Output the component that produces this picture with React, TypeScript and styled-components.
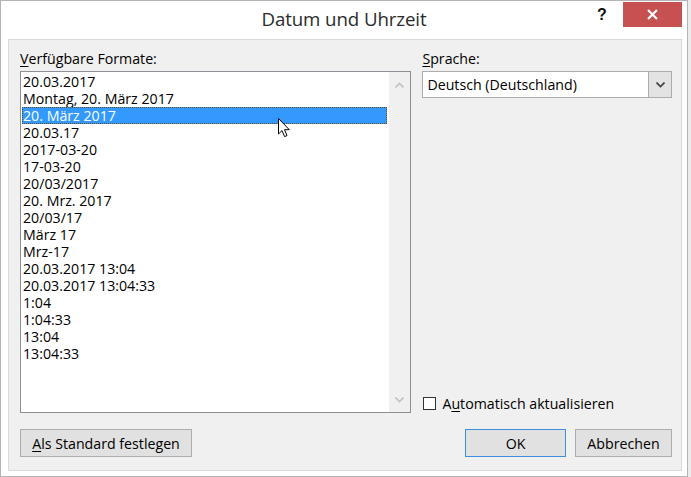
import React from "react";
import styled, { createGlobalStyle } from "styled-components";

const Global = createGlobalStyle`
  html, body { margin: 0; padding: 0; background: #ececec; }
  body { font-family: "Open Sans", "Noto Sans", sans-serif; }
`;

const Window = styled.div`
  width: 686px;
  height: 475px;
  border: 1px solid #b4b4b4;
  background: #ffffff;
  display: flex;
  flex-direction: column;
  position: relative;
`;

const TitleBar = styled.div`
  height: 38px;
  display: flex;
  align-items: flex-start;
  justify-content: center;
  position: relative;
`;

const Title = styled.div`
  font-family: "Open Sans", sans-serif;
  font-size: 18.7px;
  line-height: 24px;
  color: #2b2b2b;
  margin-top: 6px;
  letter-spacing: -0.1px;
`;

const TitleButtons = styled.div`
  position: absolute;
  right: 5px;
  top: 1px;
  display: flex;
  align-items: flex-start;
`;

const HelpButton = styled.div`
  font-family: "Liberation Sans", sans-serif;
  font-weight: bold;
  font-size: 16px;
  color: #111;
  width: 26px;
  text-align: center;
  margin-top: 4px;
  margin-right: 8px;
`;

const CloseButton = styled.div`
  width: 59px;
  height: 25px;
  background: #c75050;
  display: flex;
  align-items: center;
  justify-content: center;
`;

const Panel = styled.div`
  flex: 1;
  margin: 0 5px 5px 7px;
  border: 1px solid #dadada;
  background: #f0f0f0;
  padding: 9px 9px 13px 11px;
  display: flex;
  flex-direction: column;
  font-size: 14.2px;
  color: #000;
`;

const Columns = styled.div`
  display: flex;
  gap: 11px;
  flex: 1;
`;

const LeftColumn = styled.div`
  width: 392px;
  display: flex;
  flex-direction: column;
`;

const RightColumn = styled.div`
  width: 250px;
  display: flex;
  flex-direction: column;
`;

const Label = styled.div`
  height: 19px;
  line-height: 19px;
  margin-bottom: 3px;
  white-space: nowrap;
`;

const U = styled.span`
  text-decoration: underline;
  text-underline-offset: 2px;
`;

const ListBox = styled.div`
  height: 342px;
  border: 1px solid #8c8f96;
  background: #fff;
  display: grid;
  grid-template-columns: 1fr 21px;
  box-sizing: border-box;
  position: relative;
`;

const Items = styled.div`
  padding: 1px 2px 0 1px;
  display: flex;
  flex-direction: column;
`;

const Item = styled.div<{ $selected?: boolean }>`
  height: 17px;
  line-height: 17px;
  padding-left: 1px;
  white-space: nowrap;
  box-sizing: border-box;
  background: ${(p) => (p.$selected ? "#3399ff" : "transparent")};
  color: ${(p) => (p.$selected ? "#fff" : "#000")};
  outline: ${(p) => (p.$selected ? "1px dotted #6b4a1c" : "none")};
  outline-offset: -1px;
`;

const ScrollTrack = styled.div`
  background: #f0f0f0;
  display: flex;
  flex-direction: column;
  justify-content: space-between;
  align-items: center;
  padding: 10px 0 9px;
`;

const Cursor = styled.svg`
  position: absolute;
  left: 257px;
  top: 46px;
`;

const Select = styled.div`
  height: 27px;
  box-sizing: border-box;
  border: 1px solid #acacac;
  background: #fff;
  display: flex;
  align-items: stretch;
`;

const SelectValue = styled.div`
  flex: 1;
  padding-left: 4px;
  line-height: 25px;
  white-space: nowrap;
`;

const SelectButton = styled.div`
  width: 22px;
  border-left: 1px solid #acacac;
  background: #e3e3e3;
  display: flex;
  align-items: center;
  justify-content: center;
`;

const Spacer = styled.div`
  flex: 1;
`;

const CheckRow = styled.label`
  display: flex;
  align-items: center;
  gap: 6px;
  height: 19px;
  margin-bottom: 1px;
  padding-left: 1px;
  white-space: nowrap;
`;

const CheckBox = styled.span`
  width: 13px;
  height: 13px;
  box-sizing: border-box;
  border: 1px solid #333;
  background: #fff;
  display: inline-block;
`;

const ButtonRow = styled.div`
  display: flex;
  align-items: center;
  margin-top: 15px;
`;

const Button = styled.div<{ $w: number; $default?: boolean }>`
  width: ${(p) => p.$w}px;
  height: 28px;
  box-sizing: border-box;
  border: 1px solid ${(p) => (p.$default ? "#3c8fe0" : "#adadad")};
  background: #e1e1e1;
  display: flex;
  align-items: center;
  justify-content: center;
  white-space: nowrap;
  margin-left: ${(p) => (p.$default ? "auto" : "0")};
`;

const ButtonGap = styled.div`
  width: 9px;
`;

const items = [
  "20.03.2017",
  "Montag, 20. März 2017",
  "20. März 2017",
  "20.03.17",
  "2017-03-20",
  "17-03-20",
  "20/03/2017",
  "20. Mrz. 2017",
  "20/03/17",
  "März 17",
  "Mrz-17",
  "20.03.2017 13:04",
  "20.03.2017 13:04:33",
  "1:04",
  "1:04:33",
  "13:04",
  "13:04:33",
];

const Chevron = ({ up, color }: { up?: boolean; color: string }) => (
  <svg width="9" height="6" viewBox="0 0 9 6">
    <path
      d={up ? "M0.5 5.5 L4.5 1.5 L8.5 5.5" : "M0.5 0.5 L4.5 4.5 L8.5 0.5"}
      fill="none"
      stroke={color}
      strokeWidth="1.6"
    />
  </svg>
);

export default function App() {
  return (
    <>
      <Global />
      <Window>
        <TitleBar>
          <Title>Datum und Uhrzeit</Title>
          <TitleButtons>
            <HelpButton>?</HelpButton>
            <CloseButton>
              <svg width="11" height="11" viewBox="0 0 11 11">
                <path d="M1 1 L10 10 M10 1 L1 10" stroke="#fff" strokeWidth="2.2" />
              </svg>
            </CloseButton>
          </TitleButtons>
        </TitleBar>
        <Panel>
          <Columns>
            <LeftColumn>
              <Label>
                <U>V</U>erfügbare Formate:
              </Label>
              <ListBox>
                <Items>
                  {items.map((t, i) => (
                    <Item key={i} $selected={i === 2}>
                      {t}
                    </Item>
                  ))}
                </Items>
                <ScrollTrack>
                  <Chevron up color="#c2c2c2" />
                  <Chevron color="#c2c2c2" />
                </ScrollTrack>
                <Cursor width="13" height="20" viewBox="0 0 13 20">
                  <path
                    d="M0.5 0.5 L0.5 16 L4 12.6 L6.6 18.6 L9 17.6 L6.5 11.7 L11.3 11.7 Z"
                    fill="#fff"
                    stroke="#000"
                    strokeWidth="1"
                    strokeLinejoin="miter"
                  />
                </Cursor>
              </ListBox>
            </LeftColumn>
            <RightColumn>
              <Label>
                <U>S</U>prache:
              </Label>
              <Select>
                <SelectValue>Deutsch (Deutschland)</SelectValue>
                <SelectButton>
                  <Chevron color="#404040" />
                </SelectButton>
              </Select>
              <Spacer />
              <CheckRow>
                <CheckBox />
                <span>
                  A<U>u</U>tomatisch aktualisieren
                </span>
              </CheckRow>
            </RightColumn>
          </Columns>
          <ButtonRow>
            <Button $w={172}>
              <span>
                <U>A</U>ls Standard festlegen
              </span>
            </Button>
            <Button $w={101} $default>
              OK
            </Button>
            <ButtonGap />
            <Button $w={97}>Abbrechen</Button>
          </ButtonRow>
        </Panel>
      </Window>
    </>
  );
}
